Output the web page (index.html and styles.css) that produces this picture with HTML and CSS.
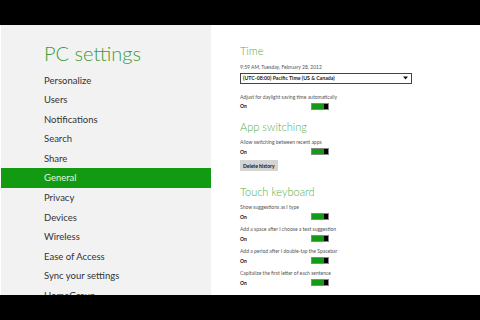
FILE: index.html
```html
<!DOCTYPE html>
<html>
    <head>
        <title>PC settings</title>
        <link rel="stylesheet" href="styles.css">
    </head>
    <body>
        <div class="screen">
            <nav class="sidebar">
                <h1>PC settings</h1>
                <ul class="menu">
                    <li>Personalize</li>
                    <li>Users</li>
                    <li>Notifications</li>
                    <li>Search</li>
                    <li>Share</li>
                    <li class="active">General</li>
                    <li>Privacy</li>
                    <li>Devices</li>
                    <li>Wireless</li>
                    <li>Ease of Access</li>
                    <li>Sync your settings</li>
                    <li>HomeGroup</li>
                </ul>
            </nav>
            <main class="content">
                <h2>Time</h2>
                <div class="date">9:59 AM, Tuesday, February 28, 2012</div>
                <div class="select">
                    <span>(UTC-08:00) Pacific Time (US &amp; Canada)</span>
                    <svg class="arrow" width="5" height="4" viewBox="0 0 5 4"><path d="M0 0.5h5L2.5 3.5z" fill="#111"/></svg>
                </div>
                <div class="setting">
                    <div class="label">Adjust for daylight saving time automatically</div>
                    <div class="state"><span>On</span><div class="toggle"><div class="thumb"></div></div></div>
                </div>

                <h2>App switching</h2>
                <div class="setting">
                    <div class="label">Allow switching between recent apps</div>
                    <div class="state"><span>On</span><div class="toggle"><div class="thumb"></div></div></div>
                </div>
                <button class="btn">Delete history</button>

                <h2 class="spaced">Touch keyboard</h2>
                <div class="setting">
                    <div class="label">Show suggestions as I type</div>
                    <div class="state"><span>On</span><div class="toggle"><div class="thumb"></div></div></div>
                </div>
                <div class="setting">
                    <div class="label">Add a space after I choose a text suggestion</div>
                    <div class="state"><span>On</span><div class="toggle"><div class="thumb"></div></div></div>
                </div>
                <div class="setting">
                    <div class="label">Add a period after I double-tap the Spacebar</div>
                    <div class="state"><span>On</span><div class="toggle"><div class="thumb"></div></div></div>
                </div>
                <div class="setting">
                    <div class="label">Capitalize the first letter of each sentence</div>
                    <div class="state"><span>On</span><div class="toggle"><div class="thumb"></div></div></div>
                </div>
            </main>
        </div>
    </body>
</html>
```

FILE: styles.css
```css
html, body {
    margin: 0;
    background: #000;
    width: 480px;
    height: 320px;
    overflow: hidden;
    font-family: Lato, "Open Sans", sans-serif;
}
.screen {
    margin-top: 25px;
    height: 270px;
    display: flex;
    overflow: hidden;
    background: #fff;
}
.sidebar {
    width: 210px;
    margin-left: 1px;
    background: #f2f2f2;
    overflow: hidden;
}
h1 {
    margin: 15px 0 4.5px 43px;
    font-size: 20px;
    line-height: 26px;
    font-weight: 300;
    color: #3c9c38;
}
.menu {
    list-style: none;
    margin: 0;
    padding: 0;
}
.menu li {
    padding-left: 43px;
    font-size: 9.5px;
    line-height: 19.6px;
    color: #333;
}
.menu li.active {
    background: #129a12;
    color: #e4f6de;
}
.content {
    flex: 1;
    padding: 18px 0 0 29px;
    color: #555;
}
h2 {
    margin: 0 0 4.5px;
    font-size: 11px;
    line-height: 15px;
    font-weight: 300;
    color: #4fb04a;
}
.setting + h2 {
    margin-top: 8px;
}
h2.spaced {
    margin-top: 12.5px;
}
.date {
    font-size: 5px;
    line-height: 8px;
}
.select {
    margin-top: 2px;
    width: 165px;
    height: 9px;
    border: 1px solid #444;
    display: flex;
    align-items: center;
    justify-content: space-between;
    padding: 0 3px 0 2px;
    font-size: 5.2px;
    font-weight: 700;
    color: #222;
}
.select + .setting {
    margin-top: 9px;
}
.setting {
    margin-bottom: 4px;
}
.label {
    font-size: 5px;
    line-height: 9px;
}
.state {
    display: flex;
    align-items: center;
    height: 9px;
    font-size: 5px;
    font-weight: 700;
    color: #111;
}
.state span {
    width: 71px;
}
.toggle {
    width: 16px;
    height: 5px;
    border: 0.5px solid #888;
    background: #149a14;
    display: flex;
    justify-content: flex-end;
}
.thumb {
    width: 4px;
    background: #000;
}
.btn {
    display: block;
    margin: 0;
    height: 11px;
    padding: 0 3px;
    border: none;
    background: #d4d4d4;
    font-family: inherit;
    font-size: 5px;
    font-weight: 700;
    color: #111;
}
```
